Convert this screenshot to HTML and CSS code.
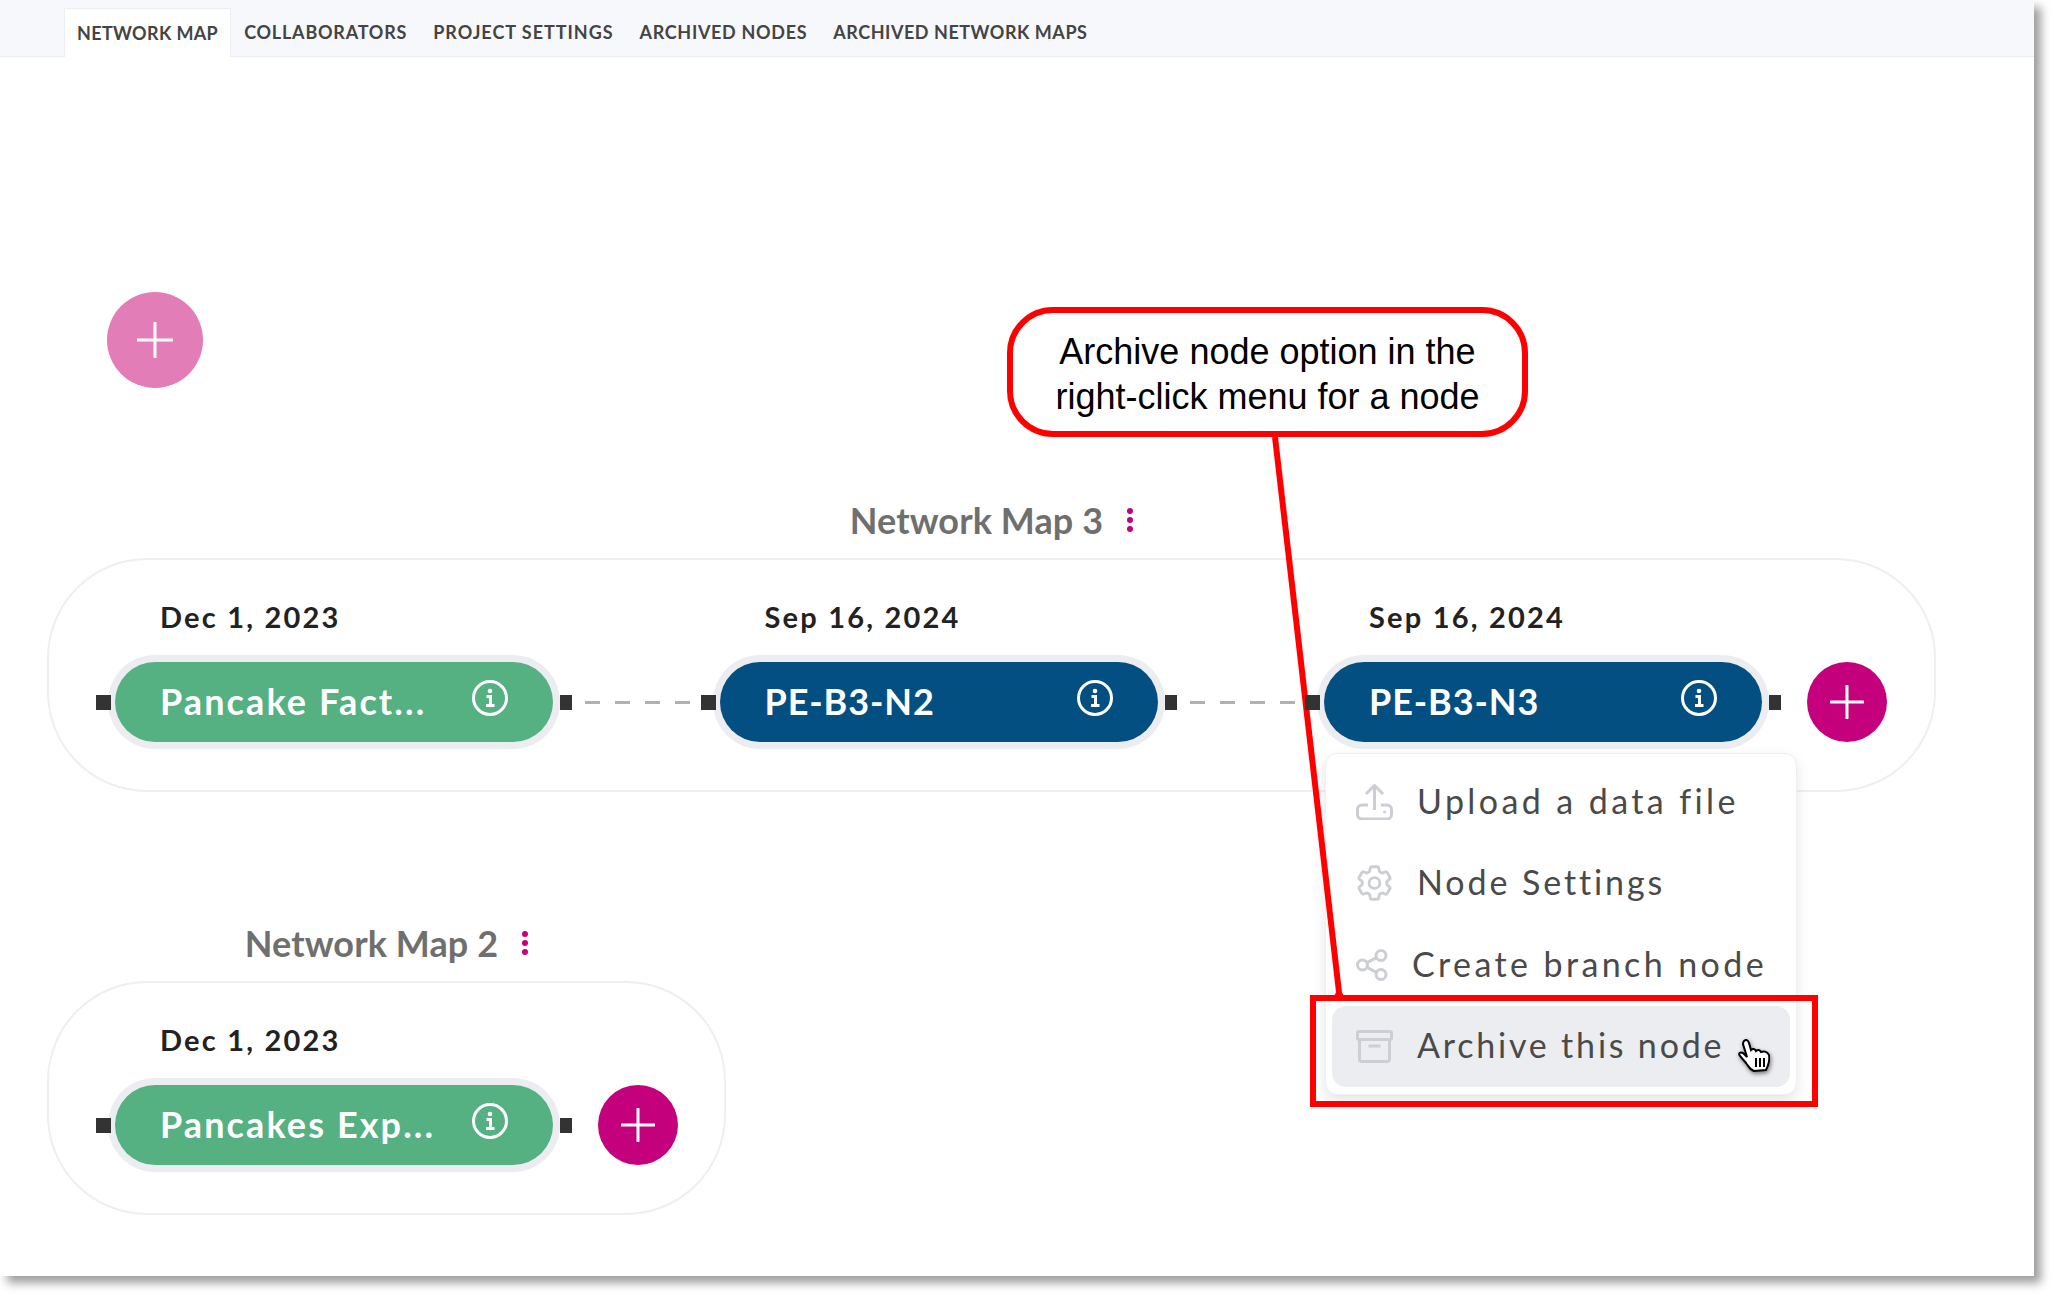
FILE: index.html
```html
<!DOCTYPE html>
<html>
<head>
<title>Network Map</title>
<link rel="stylesheet" href="styles.css">
</head>
<body>
<div class="page">
  <nav class="tabs">
    <a class="tab active">NETWORK MAP</a>
    <a class="tab">COLLABORATORS</a>
    <a class="tab">PROJECT SETTINGS</a>
    <a class="tab">ARCHIVED NODES</a>
    <a class="tab">ARCHIVED NETWORK MAPS</a>
  </nav>

  <main class="canvas">
    <button class="add add-big"><svg viewBox="0 0 36 36"><path d="M18 1v34M1 18h34"/></svg></button>

    <section class="map map-3">
      <h2 class="map-title">Network Map 3 <span class="dots"><i></i><i></i><i></i></span></h2>
      <div class="map-box">
        <div class="node">
          <div class="date">Dec 1, 2023</div>
          <div class="node-row">
            <span class="port port-in"></span>
            <div class="pill green"><span class="pill-name">Pancake Fact...</span>
              <svg class="info" viewBox="0 0 36 36"><circle cx="18" cy="18" r="16.5"/><circle class="info-dot" cx="18" cy="11" r="2.3"/><path d="M14.5 16.5h4v9M14 25.5h8.5"/></svg>
            </div>
            <span class="port port-out"></span>
          </div>
        </div>
        <div class="link"></div>
        <div class="node">
          <div class="date">Sep 16, 2024</div>
          <div class="node-row">
            <span class="port port-in"></span>
            <div class="pill blue"><span class="pill-name">PE-B3-N2</span>
              <svg class="info" viewBox="0 0 36 36"><circle cx="18" cy="18" r="16.5"/><circle class="info-dot" cx="18" cy="11" r="2.3"/><path d="M14.5 16.5h4v9M14 25.5h8.5"/></svg>
            </div>
            <span class="port port-out"></span>
          </div>
        </div>
        <div class="link"></div>
        <div class="node">
          <div class="date">Sep 16, 2024</div>
          <div class="node-row">
            <span class="port port-in"></span>
            <div class="pill blue"><span class="pill-name">PE-B3-N3</span>
              <svg class="info" viewBox="0 0 36 36"><circle cx="18" cy="18" r="16.5"/><circle class="info-dot" cx="18" cy="11" r="2.3"/><path d="M14.5 16.5h4v9M14 25.5h8.5"/></svg>
            </div>
            <span class="port port-out"></span>
          </div>
        </div>
        <button class="add add-end"><svg viewBox="0 0 34 34"><path d="M17 1v32M1 17h32"/></svg></button>
      </div>
    </section>

    <section class="map map-2">
      <h2 class="map-title">Network Map 2 <span class="dots"><i></i><i></i><i></i></span></h2>
      <div class="map-box">
        <div class="node">
          <div class="date">Dec 1, 2023</div>
          <div class="node-row">
            <span class="port port-in"></span>
            <div class="pill green"><span class="pill-name">Pancakes Exp...</span>
              <svg class="info" viewBox="0 0 36 36"><circle cx="18" cy="18" r="16.5"/><circle class="info-dot" cx="18" cy="11" r="2.3"/><path d="M14.5 16.5h4v9M14 25.5h8.5"/></svg>
            </div>
            <span class="port port-out"></span>
          </div>
        </div>
        <button class="add add-end"><svg viewBox="0 0 34 34"><path d="M17 1v32M1 17h32"/></svg></button>
      </div>
    </section>

    <ul class="menu">
      <li class="menu-item">
        <svg class="menu-icon" width="37" height="36" viewBox="0 0 37 36"><path d="M18.5 26V3M10 10l8.500-8.500L27 10M12 21H6a4.500 4.500 0 0 0-4.500 4.500v5A4.500 4.500 0 0 0 6 35h25a4.500 4.500 0 0 0 4.500-4.500v-5A4.500 4.500 0 0 0 31 21h-6"/><circle class="fill" cx="28.500" cy="28" r="1.500"/></svg>
        <span>Upload a data file</span>
      </li>
      <li class="menu-item">
        <svg class="menu-icon gear" width="37" height="36" viewBox="2.500 2 19 20"><path d="M9.594 3.940c.09-.542.56-.94 1.110-.94h2.593c.55 0 1.020.398 1.110.94l.213 1.281c.063.374.313.686.645.870.074.040.147.083.22.127.325.196.72.257 1.075.124l1.217-.456a1.125 1.125 0 0 1 1.370.490l1.296 2.247a1.125 1.125 0 0 1-.26 1.431l-1.003.827c-.293.241-.438.613-.43.992a7.723 7.723 0 0 1 0 .255c-.008.378.137.75.43.991l1.004.827c.424.35.534.955.26 1.430l-1.298 2.247a1.125 1.125 0 0 1-1.369.491l-1.217-.456c-.355-.133-.75-.072-1.076.124a6.470 6.470 0 0 1-.22.128c-.331.183-.581.495-.644.869l-.213 1.281c-.09.543-.56.94-1.110.94h-2.594c-.55 0-1.019-.398-1.110-.94l-.213-1.281c-.062-.374-.312-.686-.644-.87a6.520 6.520 0 0 1-.22-.127c-.325-.196-.72-.257-1.076-.124l-1.217.456a1.125 1.125 0 0 1-1.369-.49l-1.297-2.247a1.125 1.125 0 0 1 .26-1.431l1.004-.827c.292-.24.437-.613.43-.991a6.932 6.932 0 0 1 0-.255c.007-.38-.138-.751-.43-.992l-1.004-.827a1.125 1.125 0 0 1-.26-1.430l1.297-2.247a1.125 1.125 0 0 1 1.370-.491l1.216.456c.356.133.751.072 1.076-.124.072-.044.146-.086.22-.128.332-.183.582-.495.644-.869l.214-1.280Z"/><circle cx="12" cy="12" r="3"/></svg>
        <span>Node Settings</span>
      </li>
      <li class="menu-item">
        <svg class="menu-icon" width="32" height="32" viewBox="0 0 32 32"><circle cx="6.500" cy="16" r="5"/><circle cx="25" cy="6.500" r="5"/><circle cx="25" cy="25.500" r="5"/><path d="M11 13.700l9.500-5M11 18.300l9.500 5"/></svg>
        <span>Create branch node</span>
      </li>
      <li class="menu-item hover">
        <svg class="menu-icon" width="37" height="33" viewBox="0 0 37 33"><rect x="1.500" y="1.500" width="34" height="8" rx="1.500"/><path d="M3.500 9.500V29a2.500 2.500 0 0 0 2.500 2.500h25a2.500 2.500 0 0 0 2.500-2.500V9.500M12.500 16h12"/></svg>
        <span>Archive this node</span>
      </li>
    </ul>

    <!-- annotation on top of the screenshot -->
    <svg class="leader" width="80" height="570" viewBox="0 0 80 570"><path d="M4 0L68 555"/><path class="leader-tip" d="M68 550l5 9h-10z"/></svg>
    <div class="callout">Archive node option in the<br>right-click menu for a node</div>
    <div class="redbox"></div>
    <svg class="hand" width="32" height="34" viewBox="0 0 32 34"><path d="M6 2C8 0 10 1 11 4L13 11C15 9 17 10 18 12C20 10 22 11 23 13C25 12 29 12 31 16C32 21 30 27 28 31L16 32C12 31 11 28 8 24L2 17C0 14 2 13 5 14L9 18L5 5C5 4 5 3 6 2Z"/><path class="hand-lines" d="M18 19v9M22 19v9M26 19v9"/></svg>
  </main>
</div>
</body>
</html>
```
FILE: styles.css
```css
html, body {
  margin: 0;
  padding: 0;
  background: #fff;
}
body {
  width: 2054px;
  height: 1296px;
  overflow: hidden;
  font-family: 'Lato', 'Liberation Sans', sans-serif;
}
.page {
  width: 2034px;
  height: 1276px;
  background: #fff;
  box-shadow: 7px 7px 9px rgba(0, 0, 0, .38);
}

/* tabs */
.tabs {
  display: flex;
  height: 57px;
  padding-left: 64px;
  box-sizing: border-box;
  align-items: flex-end;
  background: #f7f8fc;
  border-bottom: 1px solid #eceef2;
}
.tab {
  height: 49px;
  line-height: 48px;
  margin-bottom: -1px;
  padding: 0 13px;
  box-sizing: border-box;
  font-size: 18px;
  font-weight: 700;
  letter-spacing: .54px;
  color: #444;
  white-space: nowrap;
}
.tab:nth-child(1) { letter-spacing: .36px; }
.tab:nth-child(2) { letter-spacing: .78px; }
.tab:nth-child(3) { letter-spacing: .97px; }
.tab:nth-child(4) { letter-spacing: .67px; }
.tab.active {
  background: #fff;
  border: 1px solid #eceef2;
  border-bottom: 0;
  padding: 0 12px;
}

/* free canvas below the tabs */
.canvas {
  position: relative;
  height: 1219px;
}
.map {
  position: absolute;
  left: 47px;
}
.map-3 { top: 443px; }
.map-2 { top: 866px; }
.map-title {
  display: flex;
  justify-content: center;
  align-items: center;
  height: 40px;
  margin: 0 0 18px 0;
  font-size: 36px;
  font-weight: 700;
  letter-spacing: .1px;
  color: #6f6f6f;
  gap: 24px;
}
.dots {
  display: flex;
  flex-direction: column;
  gap: 3px;
}
.dots i {
  display: block;
  width: 6px;
  height: 6px;
  border-radius: 50%;
  background: #c5007c;
}
.map-box {
  display: flex;
  align-items: flex-end;
  padding: 38px 47px 48px 47px;
  border: 2px solid #eeeff3;
  border-radius: 100px;
  background: #fff;
}
.map-2 .map-box {
  padding-right: 46px;
}
.date {
  height: 38px;
  line-height: 38px;
  margin-bottom: 26px;
  padding-left: 64px;
  font-size: 29px;
  font-weight: 700;
  color: #222;
  letter-spacing: 2.2px;
}
.node-row {
  display: flex;
  align-items: center;
}
.port {
  display: block;
  height: 15px;
  background: #333;
}
.port-in {
  position: relative;
  z-index: 1;
  width: 15px;
  margin-right: 4px;
}
.port-out {
  width: 12px;
  margin-left: 7px;
}
.pill {
  display: flex;
  align-items: center;
  width: 438px;
  height: 80px;
  padding: 0 45px;
  box-sizing: border-box;
  border-radius: 40px;
  box-shadow: 0 0 0 7px #ecedf1;
  color: #fff;
  font-size: 36px;
  font-weight: 700;
}
.pill-name {
  margin-bottom: 3px;
}
.green {
  background: #55b082;
  letter-spacing: 2.1px;
}
.blue {
  background: #034f81;
  letter-spacing: .9px;
}
.info {
  width: 36px;
  height: 36px;
  margin-left: auto;
  margin-bottom: 8px;
  fill: none;
  stroke: #fff;
  stroke-width: 3;
}
.info circle.info-dot {
  fill: #fff;
  stroke: none;
}
.link {
  flex: none;
  width: 105px;
  height: 3px;
  margin: 0 10.5px 38px 13px;
  background: repeating-linear-gradient(90deg, #b0b0b5 0, #b0b0b5 15px, transparent 15px, transparent 30px);
}
.add {
  display: flex;
  align-items: center;
  justify-content: center;
  flex: none;
  padding: 0;
  border: 0;
  border-radius: 50%;
}
.add svg {
  fill: none;
  stroke: #fff;
  stroke-width: 3;
  stroke-linecap: round;
}
.add-end {
  width: 80px;
  height: 80px;
  margin-left: 26px;
  background: #c5007c;
}
.add-end svg {
  width: 34px;
  height: 34px;
}
.add-big {
  position: absolute;
  left: 107px;
  top: 235px;
  width: 96px;
  height: 96px;
  background: #e27db7;
}
.add-big svg {
  width: 36px;
  height: 36px;
}

/* context menu */
.menu {
  position: absolute;
  left: 1325px;
  top: 696px;
  width: 472px;
  margin: 0;
  padding: 7px 6px;
  box-sizing: border-box;
  list-style: none;
  background: #fff;
  border: 1px solid #f0f0f3;
  border-radius: 12px;
  box-shadow: 0 6px 14px rgba(0, 0, 0, .1);
}
.menu-item {
  display: flex;
  align-items: center;
  gap: 24px;
  height: 81.5px;
  padding: 0 24px;
  border-radius: 14px;
  font-size: 34px;
  color: #4a4a4a;
  letter-spacing: 3.4px;
  white-space: nowrap;
}
.menu-item:nth-child(2) { letter-spacing: 2.9px; }
.menu-item:nth-child(4) { letter-spacing: 2.8px; }
.menu-item span {
  margin-bottom: 3px;
}
.menu-item.hover {
  background: #ecedf1;
}
.menu-icon {
  flex: none;
  fill: none;
  stroke: #ccced3;
  stroke-width: 3;
}
.menu-icon.gear {
  stroke-width: 1.6;
}
.menu-icon .fill {
  fill: #ccced3;
  stroke: none;
}

/* annotation */
.callout {
  position: absolute;
  left: 1007px;
  top: 250px;
  width: 521px;
  height: 130px;
  box-sizing: border-box;
  padding-top: 16px;
  border: 6px solid #f00;
  border-radius: 46px;
  background: #fff;
  font-family: 'Liberation Sans', Arial, sans-serif;
  font-size: 36px;
  line-height: 45px;
  text-align: center;
  color: #000;
}
.leader {
  position: absolute;
  left: 1271px;
  top: 380px;
  overflow: visible;
}
.leader path {
  fill: none;
  stroke: #f00;
  stroke-width: 6;
}
.leader path.leader-tip {
  fill: #f00;
  stroke: none;
}
.redbox {
  position: absolute;
  left: 1310px;
  top: 938px;
  width: 508px;
  height: 112px;
  box-sizing: border-box;
  border: 6px solid #f00;
}
.hand {
  position: absolute;
  left: 1738px;
  top: 982px;
  fill: #fff;
  stroke: #000;
  stroke-width: 2;
  filter: drop-shadow(1px 2px 2px rgba(0, 0, 0, .5));
}
.hand-lines {
  fill: none;
}
```
